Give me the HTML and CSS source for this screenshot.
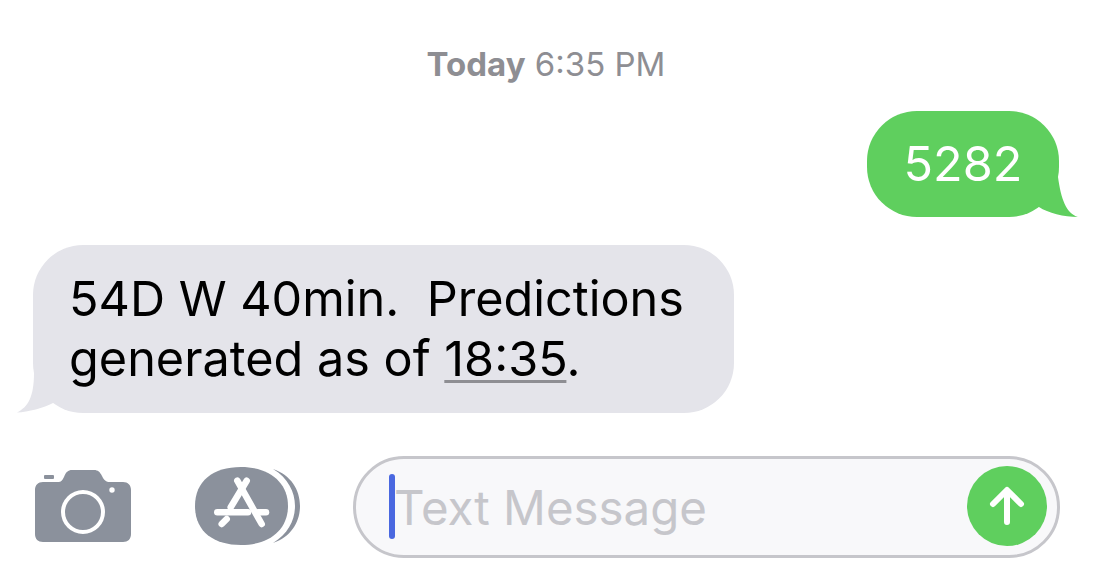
FILE: index.html
```html
<!DOCTYPE html>
<html>
    <head>
        <meta charset="UTF-8">
        <title>Messages</title>
        <link rel="stylesheet" href="styles.css">
    </head>
    <body>
        <section class="thread">
            <p class="stamp"><b>Today</b> 6:35 PM</p>

            <div class="row row-out">
                <div class="bubble bubble-out">
                    5282
                    <svg class="tail tail-out" width="50" height="40" viewBox="0 0 50 40"><path d="M11 30C20 36 36 40 50 40C38 36 33 22 30 0H0V30Z"/></svg>
                </div>
            </div>

            <div class="row row-in">
                <div class="bubble bubble-in">
                    <span class="line">54D W 40min.  Predictions</span>
                    <span class="line">generated as of <span class="link">18:35</span>.</span>
                    <svg class="tail tail-in" width="50" height="40" viewBox="0 0 50 40"><path d="M1 39.5C12 39 28 35 37 30H50V0H18C18 24 12 34 1 39.5Z"/></svg>
                </div>
            </div>
        </section>

        <footer class="composer">
            <svg class="icon icon-camera" width="96" height="72" viewBox="0 0 96 72">
                <rect x="9" y="5" width="10" height="4" rx="1" fill="#8b919c"/>
                <path fill="#8b919c" fill-rule="evenodd" d="M8 12H23C26 12 27 11 29 7C31 2 33 0 37 0H59C63 0 65 2 67 6C69 10 71 12 75 12H88C93 12 96 15 96 20V64C96 69 93 72 88 72H8C3 72 0 69 0 64V20C0 15 3 12 8 12ZM48 20A22 22 0 1 0 48 64A22 22 0 1 0 48 20ZM48 24A18 18 0 1 1 48 60A18 18 0 1 1 48 24ZM77 17.3A2.7 2.7 0 1 0 77 22.7A2.7 2.7 0 1 0 77 17.3Z"/>
            </svg>

            <svg class="icon icon-store" width="106" height="80" viewBox="0 0 106 80">
                <path fill="#8b919c" d="M0 40C0 15 18 1 46 1C74 1 93 16 93 40C93 64 74 79 46 79C18 79 0 65 0 40Z"/>
                <path fill="#8b919c" d="M78 3C96 9 105 24 105 40C105 56 96 71 78 77C93 68 100 54 100 40C100 26 93 12 78 3Z"/>
                <g stroke="#fff" stroke-width="6.5" stroke-linecap="round" fill="none">
                    <path d="M42.3 14.7L66.7 58"/>
                    <path d="M51.7 14.7L35.7 41.3"/>
                    <path d="M31.7 53L26.7 58"/>
                    <path d="M22.3 46.3H53"/>
                    <path d="M63 46.3H71"/>
                </g>
            </svg>

            <div class="field">
                <span class="caret"></span>
                <span class="placeholder">Text Message</span>
                <button class="send">
                    <svg width="40" height="44" viewBox="0 0 40 44"><path d="M20 38V7M6 20L20 6L34 20" fill="none" stroke="#fff" stroke-width="6" stroke-linecap="round" stroke-linejoin="round"/></svg>
                </button>
            </div>
        </footer>
    </body>
</html>
```

FILE: styles.css
```css
body {
    margin: 0;
    background-color: white;
    font-family: Inter, "Liberation Sans", sans-serif;
    width: 1108px;
    height: 567px;
    overflow: hidden;
}

.thread {
    padding-top: 46px;
}

.stamp {
    margin: 0 0 29px 0;
    padding-right: 16px;
    text-align: center;
    font-size: 33px;
    line-height: 36px;
    color: #8e8e93;
}

.row {
    display: flex;
}

.row-out {
    justify-content: flex-end;
    padding-right: 49px;
    margin-bottom: 28px;
}

.row-in {
    padding-left: 33px;
}

.bubble {
    position: relative;
    font-size: 48.6px;
    line-height: 60px;
    border-radius: 50px;
}

.bubble-out {
    width: 192px;
    height: 106px;
    line-height: 106px;
    text-align: center;
    background-color: #5fcf5e;
    color: white;
}

.bubble-in {
    width: 665px;
    height: 168px;
    padding-left: 36px;
    background-color: #e4e4ea;
    color: black;
}

.line {
    display: block;
    white-space: pre-wrap;
}

.line:first-child {
    padding-top: 24px;
}

.link {
    text-decoration: underline;
    text-decoration-color: #8e8e93;
    text-decoration-thickness: 3px;
    text-underline-offset: 4px;
}

.tail {
    position: absolute;
    bottom: 0;
}

.tail-out {
    right: -19px;
    fill: #5fcf5e;
}

.tail-in {
    left: -17px;
    fill: #e4e4ea;
}

.composer {
    display: flex;
    align-items: center;
    padding: 43px 0 0 35px;
}

.icon {
    flex: none;
    margin-bottom: 2px;
}

.icon-store {
    margin-left: 64px;
}

.field {
    position: relative;
    flex: none;
    display: flex;
    align-items: center;
    margin-left: 52px;
    width: 701px;
    height: 96px;
    border: 3px solid #c6c6cb;
    border-radius: 51px;
    background-color: #f8f8fa;
}

.caret {
    position: absolute;
    left: 33px;
    top: 15px;
    width: 6px;
    height: 65px;
    border-radius: 3px;
    background-color: #4a68e0;
}

.placeholder {
    padding-left: 38px;
    font-size: 47.4px;
    color: #c6c6cb;
}

.send {
    position: absolute;
    right: 10px;
    top: 7px;
    width: 80px;
    height: 80px;
    padding: 0;
    border: none;
    border-radius: 50%;
    background-color: #5fcf5e;
    display: flex;
    align-items: center;
    justify-content: center;
}
```
